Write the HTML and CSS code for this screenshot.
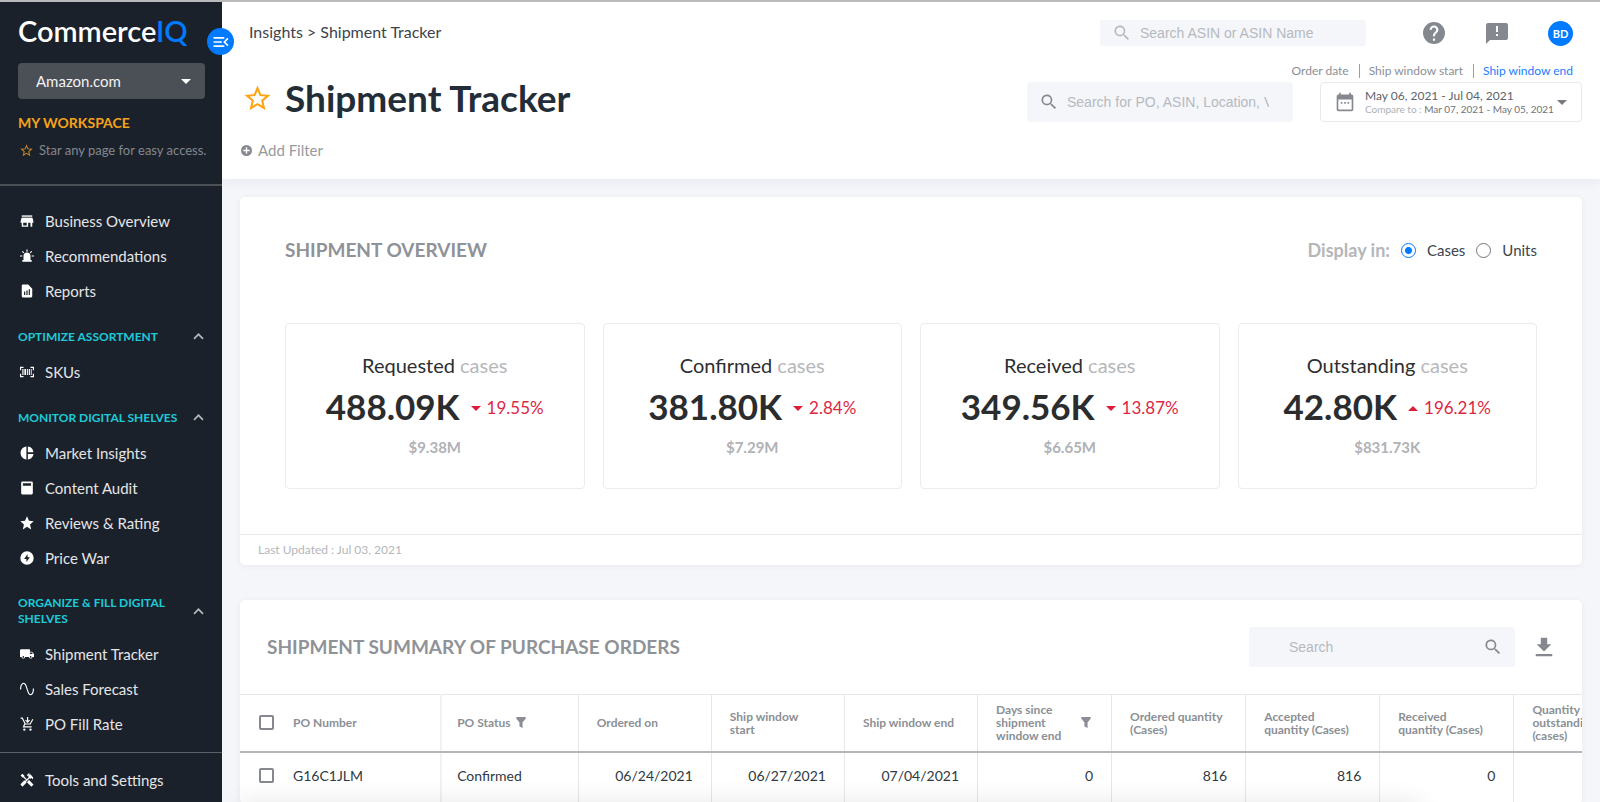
FILE: index.html
```html
<!DOCTYPE html>
<html lang="en">
<head>
    <meta charset="UTF-8">
    <meta name="viewport" content="width=device-width, initial-scale=1.0">
    <title>Shipment Tracker - CommerceIQ</title>
    <link rel="stylesheet" href="styles.css">
</head>
<body>
    <aside class="sidebar">
        <div class="sidebar-top">
            <a class="logo" href="#">Commerce<span>IQ</span></a>
            <div class="store">
                <select aria-label="Store">
                    <option>Amazon.com</option>
                </select>
            </div>
            <h2 class="workspace-title">MY WORKSPACE</h2>
            <p class="workspace-hint">
                <svg viewBox="0 0 24 24"><path d="M22 9.24l-7.19-.62L12 2 9.19 8.63 2 9.24l5.46 4.73L5.82 21 12 17.27 18.18 21l-1.63-7.03L22 9.24zM12 15.4l-3.76 2.27 1-4.28-3.32-2.88 4.38-.38L12 6.1l1.71 4.04 4.38.38-3.32 2.88 1 4.28L12 15.4z"/></svg>
                Star any page for easy access.
            </p>
        </div>

        <nav class="nav">
            <a href="#"><svg viewBox="0 0 24 24"><path opacity=".75" d="M3 2h18v4H3z"/><path d="M2.5 7h19L23 13v2h-2v7h-3v-7h-4v7H3v-7H1v-2zM5.5 15v4.5h6V15z"/></svg>Business Overview</a>
            <a href="#"><svg viewBox="0 0 24 24"><path d="M6 19v-7a6 6 0 0 1 12 0v7zM4 19h16v3H4zM11 1h2v3.5h-2zM0 11h4v2H0zM20 11h4v2h-4zM3.3 4.7l1.4-1.4 2.4 2.4-1.4 1.4zM19.3 3.3l1.4 1.4-2.4 2.4-1.4-1.4z"/></svg>Recommendations</a>
            <a href="#"><svg viewBox="0 0 24 24"><path d="M14 1H5a2 2 0 0 0-2 2v18a2 2 0 0 0 2 2h14a2 2 0 0 0 2-2V8zM9 19H7v-6h2zm4 0h-2v-8h2zm4 0h-2V9h2z" fill-rule="evenodd"/></svg>Reports</a>

            <button type="button" class="nav-group">OPTIMIZE ASSORTMENT<svg viewBox="2 2 20 20"><path d="M12 8l-6 6 1.4 1.4L12 10.8l4.6 4.6L18 14z"/></svg></button>
            <a href="#"><svg viewBox="0 0 24 24"><path d="M0 3h6v2H2v4H0zM18 3h6v6h-2V5h-4zM0 15h2v4h4v2H0zM22 15h2v6h-6v-2h4zM4 7h2v10H4zM7.5 7h3v10h-3zM12 7h1.5v10H12zM15 7h2v10h-2zM18.5 7H20v10h-1.5z"/></svg>SKUs</a>

            <button type="button" class="nav-group">MONITOR DIGITAL SHELVES<svg viewBox="2 2 20 20"><path d="M12 8l-6 6 1.4 1.4L12 10.8l4.6 4.6L18 14z"/></svg></button>
            <a href="#"><svg viewBox="0 0 24 24"><path d="M11 1v22C5.3 22.5 1 17.8 1 12S5.3 1.5 11 1zM13.5 1v9.5H23C22.5 5.5 18.5 1.5 13.5 1zM13.5 13.5V23c5-.5 9-4.5 9.5-9.5z"/></svg>Market Insights</a>
            <a href="#"><svg viewBox="0 0 24 24"><path fill-rule="evenodd" d="M4 1h16a2 2 0 0 1 2 2v18a2 2 0 0 1-2 2H4a2 2 0 0 1-2-2V3a2 2 0 0 1 2-2zm1 3v4h14V4z"/></svg>Content Audit</a>
            <a href="#"><svg viewBox="0 0 24 24"><path d="M12 18.3L19.2 23l-2-8.6L23.500 8.800l-8.100-.7L12 .5 8.600 8.100l-8.100.7 6.300 5.600-2 8.600z"/></svg>Reviews &amp; Rating</a>
            <a href="#"><svg viewBox="0 0 24 24"><path fill-rule="evenodd" d="M12 .5a11.5 11.5 0 1 0 0 23 11.5 11.5 0 0 0 0-23zM13 5v5.5h4L11 19v-5.5H7z"/></svg>Price War</a>

            <button type="button" class="nav-group"><span>ORGANIZE &amp; FILL DIGITAL SHELVES</span><svg viewBox="2 2 20 20"><path d="M12 8l-6 6 1.4 1.4L12 10.8l4.6 4.6L18 14z"/></svg></button>
            <a href="#"><svg viewBox="0 0 24 24"><path fill-rule="evenodd" d="M20.5 8H17V4H2a2 2 0 0 0-2 2v11h2.5a3.2 3.2 0 0 0 6.3 0h6.4a3.2 3.2 0 0 0 6.3 0H24v-5zM5.7 18.5a1.5 1.5 0 1 1 0-3 1.5 1.5 0 0 1 0 3zM20 9.5l2 2.5h-5V9.5zm-1.7 9a1.5 1.5 0 1 1 0-3 1.5 1.5 0 0 1 0 3z"/></svg>Shipment Tracker</a>
            <a href="#"><svg viewBox="0 0 24 24"><path class="stroke" d="M1 13C1 1 8 -1 10.5 7l3 9C16 25 23 23 23 11"/></svg>Sales Forecast</a>
            <a href="#"><svg viewBox="0 0 24 24"><circle cx="7.5" cy="21.5" r="2"/><circle cx="18" cy="21.5" r="2"/><path class="stroke" d="M1 2h3l5 10h8.5L22 4M8 12l-2 5h14M13 0v8M9.5 5.5L13 9l3.5-3.5"/></svg>PO Fill Rate</a>
        </nav>

        <div class="sidebar-bottom">
            <a href="#"><svg viewBox="1 1 22 22"><path d="M21.7 18.5l-6-6h-1l-2.5 2.5v1l6 6c.4.4 1 .4 1.4 0l2.1-2.1c.4-.4.4-1 0-1.4zM17.3 10.2l1.4-1.4 2.1 2.1c1.2-1.2 1.2-3.1 0-4.200l-3.500-3.600-1.400 1.500V1.700L15.200 1l-3.600 3.600.7.700h2.800l-1.400 1.400 1 1.100-2.900 2.900-4.100-4.200V5.100L4.700 2.100 1.900 4.900l3 3h1.400l4.200 4.200-.9.800H7.500l-5.300 5.400c-.4.400-.4 1 0 1.400l2.100 2.100c.4.400 1 .4 1.400 0l5.300-5.300v-2.100l5.200-5.200z"/></svg>Tools and Settings</a>
        </div>

        <button type="button" class="collapse" aria-label="Collapse menu">
            <svg viewBox="0 0 24 24"><path d="M3 18h13v-2H3zm0-5h10v-2H3zm0-7v2h13V6zm18 9.6L17.4 12 21 8.4 19.6 7l-5 5 5 5z"/></svg>
        </button>
    </aside>

    <main class="main">
        <header class="header">
            <div class="topbar">
                <div class="breadcrumb"><a href="#">Insights</a> &gt; <a href="#">Shipment Tracker</a></div>
                <label class="search search-asin">
                    <svg viewBox="0 0 24 24"><path d="M15.5 14h-.8l-.3-.3A6.5 6.5 0 1 0 13.7 14.4l.3.3v.8l5 5 1.5-1.5zm-6 0a4.5 4.5 0 1 1 0-9 4.5 4.5 0 0 1 0 9z"/></svg>
                    <input type="text" placeholder="Search ASIN or ASIN Name" aria-label="Search ASIN or ASIN Name">
                </label>
                <div class="topbar-icons">
                    <button type="button" aria-label="Help"><svg viewBox="0 0 24 24"><path d="M12 1a11 11 0 1 0 0 22 11 11 0 0 0 0-22zm1.1 18.7h-2.2v-2.2h2.2zm2.3-8.5l-1 1c-.8.8-1.3 1.5-1.3 3.1h-2.2v-.5c0-1.2.5-2.3 1.3-3.1l1.4-1.4c.4-.4.6-1 .6-1.5a2.2 2.2 0 0 0-4.4 0H7.6a4.4 4.4 0 0 1 8.8 0c0 1-.4 1.8-1 2.4z"/></svg></button>
                    <button type="button" aria-label="Feedback"><svg viewBox="0 0 24 24"><path d="M21 2H3a2 2 0 0 0-2 2v19l4-4h16a2 2 0 0 0 2-2V4a2 2 0 0 0-2-2zm-8 13h-2v-2h2zm0-4h-2V5h2z"/></svg></button>
                    <button type="button" class="avatar">BD</button>
                </div>
            </div>

            <div class="title-row">
                <div class="title">
                    <button type="button" aria-label="Star this page"><svg viewBox="0 0 24 24"><path d="M22 9.24l-7.19-.62L12 2 9.19 8.63 2 9.24l5.46 4.73L5.82 21 12 17.27 18.18 21l-1.63-7.03L22 9.24zM12 15.4l-3.76 2.27 1-4.28-3.32-2.88 4.38-.38L12 6.1l1.71 4.04 4.38.38-3.32 2.88 1 4.28L12 15.4z"/></svg></button>
                    <h1>Shipment Tracker</h1>
                </div>
                <label class="search search-po">
                    <svg viewBox="0 0 24 24"><path d="M15.5 14h-.8l-.3-.3A6.5 6.5 0 1 0 13.7 14.4l.3.3v.8l5 5 1.5-1.5zm-6 0a4.5 4.5 0 1 1 0-9 4.5 4.5 0 0 1 0 9z"/></svg>
                    <input type="text" placeholder="Search for PO, ASIN, Location, Vendor" aria-label="Search for PO">
                </label>
                <div class="dates">
                    <div class="date-tabs">
                        <a href="#">Order date</a>
                        <a href="#">Ship window start</a>
                        <a href="#" class="active">Ship window end</a>
                    </div>
                    <button type="button" class="date-range">
                        <svg viewBox="0 0 24 24"><path fill-rule="evenodd" d="M5 1h2v2h10V1h2v2h1a2 2 0 0 1 2 2v16a2 2 0 0 1-2 2H4a2 2 0 0 1-2-2V5a2 2 0 0 1 2-2h1zM4 9v12h16V9zM7 12h2v2H7zM11 12h2v2h-2zM15 12h2v2h-2z"/></svg>
                        <span class="date-text">
                            <span class="date-main">May 06, 2021 - Jul 04, 2021</span>
                            <span class="date-compare">Compare to : <b>Mar 07, 2021 - May 05, 2021</b></span>
                        </span>
                        <span class="caret-down"></span>
                    </button>
                </div>
            </div>

            <button type="button" class="add-filter">
                <svg viewBox="0 0 24 24"><path fill-rule="evenodd" d="M12 0a12 12 0 1 0 0 24 12 12 0 0 0 0-24zM10.5 5h3v5.5H19v3h-5.5V19h-3v-5.5H5v-3h5.5z"/></svg>
                Add Filter
            </button>
        </header>

        <div class="content">
            <section class="card">
                <div class="overview-head">
                    <h2>SHIPMENT OVERVIEW</h2>
                    <div class="display-in">
                        <span>Display in:</span>
                        <label><input type="radio" name="unit" checked>Cases</label>
                        <label><input type="radio" name="unit">Units</label>
                    </div>
                </div>
                <div class="stats">
                    <div class="stat">
                        <div class="stat-label">Requested <span>cases</span></div>
                        <div class="stat-value">488.09K <span class="change down">19.55%</span></div>
                        <div class="stat-amount">$9.38M</div>
                    </div>
                    <div class="stat">
                        <div class="stat-label">Confirmed <span>cases</span></div>
                        <div class="stat-value">381.80K <span class="change down">2.84%</span></div>
                        <div class="stat-amount">$7.29M</div>
                    </div>
                    <div class="stat">
                        <div class="stat-label">Received <span>cases</span></div>
                        <div class="stat-value">349.56K <span class="change down">13.87%</span></div>
                        <div class="stat-amount">$6.65M</div>
                    </div>
                    <div class="stat">
                        <div class="stat-label">Outstanding <span>cases</span></div>
                        <div class="stat-value">42.80K <span class="change up">196.21%</span></div>
                        <div class="stat-amount">$831.73K</div>
                    </div>
                </div>
                <div class="card-footer">Last Updated : Jul 03, 2021</div>
            </section>

            <section class="card">
                <div class="summary-head">
                    <h2>SHIPMENT SUMMARY OF PURCHASE ORDERS</h2>
                    <label class="search search-table">
                        <input type="text" placeholder="Search" aria-label="Search purchase orders">
                        <svg viewBox="0 0 24 24"><path d="M15.5 14h-.8l-.3-.3A6.5 6.5 0 1 0 13.7 14.4l.3.3v.8l5 5 1.5-1.5zm-6 0a4.5 4.5 0 1 1 0-9 4.5 4.5 0 0 1 0 9z"/></svg>
                    </label>
                    <button type="button" class="download" aria-label="Download"><svg viewBox="0 0 24 24"><path d="M20 9h-4.500V2h-7v7H4l8 8zM3 19.500v2.500h18v-2.500z"/></svg></button>
                </div>
                <div class="table-wrap">
                    <table>
                        <colgroup>
                            <col class="col-po">
                            <col class="col-status">
                            <col class="col-date" span="3">
                            <col class="col-qty" span="5">
                        </colgroup>
                        <thead>
                            <tr>
                                <th><label><input type="checkbox">PO Number</label></th>
                                <th><div class="th-filter near">PO Status <svg viewBox="0 0 12 14"><path d="M0 0h12v2L8 7v7L4 12V7L0 2z"/></svg></div></th>
                                <th>Ordered on</th>
                                <th>Ship window start</th>
                                <th>Ship window end</th>
                                <th><div class="th-filter">Days since shipment window end <svg viewBox="0 0 12 14"><path d="M0 0h12v2L8 7v7L4 12V7L0 2z"/></svg></div></th>
                                <th>Ordered quantity (Cases)</th>
                                <th>Accepted quantity (Cases)</th>
                                <th>Received quantity (Cases)</th>
                                <th>Quantity outstanding (cases)</th>
                            </tr>
                        </thead>
                        <tbody>
                            <tr>
                                <td><label><input type="checkbox">G16C1JLM</label></td>
                                <td>Confirmed</td>
                                <td class="num">06/24/2021</td>
                                <td class="num">06/27/2021</td>
                                <td class="num">07/04/2021</td>
                                <td class="num">0</td>
                                <td class="num">816</td>
                                <td class="num">816</td>
                                <td class="num">0</td>
                                <td class="num"></td>
                            </tr>
                        </tbody>
                    </table>
                </div>
            </section>
        </div>
    </main>
</body>
</html>
```
FILE: styles.css
```css
* {
    box-sizing: border-box;
}
body {
    margin: 0;
    height: 100vh;
    display: flex;
    overflow: hidden;
    border-top: 2px solid #b9babb;
    font-family: Lato, "Open Sans", sans-serif;
    font-size: 15px;
    color: #3c444d;
    background: #f5f6fa;
}
h1, h2, p {
    margin: 0;
}
a {
    color: inherit;
    text-decoration: none;
}
button {
    padding: 0;
    border: none;
    background: none;
    font-family: inherit;
    color: inherit;
    cursor: pointer;
}
svg {
    display: block;
    flex: none;
    fill: currentColor;
}
.stroke {
    fill: none;
    stroke: currentColor;
    stroke-width: 2;
}

/* Sidebar */
.sidebar {
    position: relative;
    z-index: 2;
    flex: none;
    width: 222px;
    display: flex;
    flex-direction: column;
    background: #1b212b;
    color: #e4e5e7;
}
.sidebar-top {
    height: 184px;
    padding: 12px 17px 0 18px;
    border-bottom: 2px solid #4b5057;
}
.logo {
    display: block;
    font-size: 29px;
    line-height: 34px;
    font-weight: 600;
    color: #fff;
}
.logo span {
    color: #007aff;
}
.store {
    position: relative;
    margin-top: 15px;
}
.store::after {
    content: "";
    position: absolute;
    right: 14px;
    top: 16px;
    border: 5px solid transparent;
    border-top-color: #fff;
    border-bottom: none;
    pointer-events: none;
}
.store select {
    appearance: none;
    width: 100%;
    height: 36px;
    padding: 0 18px;
    border: none;
    border-radius: 4px;
    background: #4b5057;
    color: #f1f1f2;
    font-family: inherit;
    font-size: 15px;
}
.workspace-title {
    margin-top: 14px;
    font-size: 14px;
    line-height: 20px;
    font-weight: 700;
    color: #f5a31a;
}
.workspace-hint {
    display: flex;
    align-items: center;
    gap: 5px;
    margin-top: 8px;
    padding-left: 1px;
    font-size: 13px;
    line-height: 18px;
    color: #83878d;
    white-space: nowrap;
}
.workspace-hint svg {
    width: 15px;
    height: 15px;
    color: #c58629;
}
.nav {
    flex: 1;
    overflow: hidden;
    padding-top: 17px;
}
.nav a,
.sidebar-bottom a {
    display: flex;
    align-items: center;
    gap: 11px;
    height: 35px;
    padding-left: 20px;
}
.nav a svg,
.sidebar-bottom svg {
    width: 14px;
    height: 14px;
    color: #fff;
}
.nav-group {
    display: flex;
    align-items: center;
    justify-content: space-between;
    width: 100%;
    min-height: 35px;
    margin-top: 11px;
    padding: 9px 15px 9px 18px;
    font-size: 12px;
    line-height: 16px;
    font-weight: 700;
    text-align: left;
    color: #1ccbd8;
}
.nav-group svg {
    width: 17px;
    height: 17px;
    color: #b5b8bb;
}
.nav-group span {
    width: 160px;
}
.sidebar-bottom {
    height: 50px;
    padding-top: 9px;
    border-top: 1px solid #5d6268;
}
.collapse {
    position: absolute;
    top: 26px;
    right: -12px;
    width: 27px;
    height: 27px;
    display: flex;
    align-items: center;
    justify-content: center;
    border-radius: 50%;
    background: #007aff;
    color: #fff;
}
.collapse svg {
    width: 20px;
    height: 20px;
}

/* Header */
.main {
    flex: 1;
    min-width: 0;
    overflow: hidden;
}
/* shade along the bottom edge of the scrolling area */
.main::after {
    content: "";
    position: fixed;
    left: 240px;
    right: 180px;
    bottom: -20px;
    height: 20px;
    box-shadow: 0 0 24px rgba(0, 0, 0, 0.1);
}
.header {
    padding: 18px 18px 19px 19px;
    background: #fff;
    box-shadow: 0 2px 12px rgba(30, 40, 60, 0.07);
}
.topbar {
    display: flex;
    align-items: center;
    height: 26px;
    padding: 0 9px 0 8px;
}
.breadcrumb {
    flex: 1;
    font-size: 16px;
    line-height: 18px;
    padding-bottom: 2px;
}
.search {
    display: flex;
    align-items: center;
    width: 266px;
    border-radius: 3px;
    background: #f5f6fa;
}
.search svg {
    width: 20px;
    height: 20px;
    color: #85898f;
}
.search input {
    flex: 1;
    min-width: 0;
    padding: 0;
    border: none;
    outline: none;
    background: none;
    font-family: "Liberation Sans", Arial, sans-serif;
    font-size: 14px;
    color: #3c444d;
}
.search input::placeholder {
    color: #b6b9be;
}
.search-asin {
    height: 26px;
    padding: 0 12px;
    gap: 8px;
}
.search-asin svg {
    color: #b6b9be;
}
.topbar-icons {
    display: flex;
    align-items: center;
    gap: 39px;
    margin-left: 56px;
    color: #85898f;
}
.topbar-icons svg {
    width: 24px;
    height: 24px;
}
.topbar-icons .avatar {
    width: 25px;
    height: 25px;
    border-radius: 50%;
    background: #007aff;
    color: #fff;
    font-size: 11px;
    font-weight: 700;
}
.title-row {
    display: flex;
    align-items: flex-end;
    margin-top: 18px;
}
.title {
    flex: 1;
    display: flex;
    align-items: center;
    gap: 12px;
    padding: 0 0 4px 1px;
}
.title svg {
    width: 31px;
    height: 31px;
    color: #ffa412;
}
.title h1 {
    font-size: 37px;
    line-height: 40px;
    font-weight: 700;
    color: #232d38;
}
.search-po {
    height: 40px;
    padding: 0 24px 0 12px;
    gap: 8px;
}
.dates {
    width: 262px;
    margin-left: 27px;
}
.date-tabs {
    display: flex;
    justify-content: flex-end;
    padding-right: 9px;
    margin-bottom: 4px;
    font-size: 12px;
    line-height: 14px;
    color: #8b8f95;
    white-space: nowrap;
}
.date-tabs a + a {
    margin-left: 10px;
    padding-left: 9px;
    border-left: 1px solid #9a9da2;
}
.date-tabs .active {
    color: #1a7cff;
}
.date-range {
    display: flex;
    align-items: center;
    width: 100%;
    height: 40px;
    padding: 0 14px;
    border: 1px solid #e8e9eb;
    border-radius: 4px;
    background: #fff;
    text-align: left;
}
.date-range svg {
    width: 20px;
    height: 20px;
    margin-right: 10px;
    color: #85898f;
}
.date-text {
    flex: 1;
    white-space: nowrap;
}
.date-main,
.date-compare {
    display: block;
}
.date-main {
    font-size: 12px;
    line-height: 14px;
    color: #5d636a;
}
.date-compare {
    font-size: 10px;
    line-height: 12px;
    color: #adb0b4;
}
.date-compare b {
    font-weight: 400;
    color: #6f747a;
}
.caret-down {
    border: 5px solid transparent;
    border-top-color: #777b80;
    border-bottom: none;
}
.add-filter {
    display: flex;
    align-items: center;
    gap: 6px;
    height: 20px;
    margin-top: 18px;
    font-size: 15px;
    color: #97999d;
}
.add-filter svg {
    width: 11px;
    height: 11px;
    color: #85898f;
}

/* Cards */
.content {
    display: flex;
    flex-direction: column;
    gap: 35px;
    padding: 18px;
}
.card {
    border-radius: 5px;
    background: #fff;
    box-shadow: 0 1px 6px rgba(30, 40, 60, 0.06);
}
.card h2 {
    font-size: 19px;
    line-height: 24px;
    font-weight: 700;
    color: #8f9297;
}
.overview-head {
    display: flex;
    align-items: center;
    justify-content: space-between;
    padding: 41px 45px 0;
}
.display-in {
    display: flex;
    align-items: center;
    gap: 11px;
    font-size: 15px;
}
.display-in > span {
    font-size: 18px;
    font-weight: 700;
    color: #b4b6ba;
}
.display-in label {
    display: flex;
    align-items: center;
    gap: 11px;
}
.display-in input {
    appearance: none;
    width: 15px;
    height: 15px;
    margin: 0;
    border: 1px solid #70757c;
    border-radius: 50%;
}
.display-in input:checked {
    border-color: #007aff;
    background: radial-gradient(#007aff 3px, #fff 4px);
}
.stats {
    display: grid;
    grid-template-columns: repeat(4, 1fr);
    gap: 18px;
    padding: 61px 45px 45px;
}
.stat {
    height: 166px;
    padding-top: 28px;
    border: 1px solid #ebecee;
    border-radius: 4px;
    text-align: center;
}
.stat-label {
    font-size: 20px;
    line-height: 26px;
    color: #2d2e30;
}
.stat-label span {
    color: #b6b7bb;
}
.stat-value {
    display: flex;
    align-items: center;
    justify-content: center;
    gap: 11px;
    margin-top: 5px;
    font-size: 35px;
    line-height: 42px;
    font-weight: 700;
    color: #2b2c2e;
}
.change {
    display: flex;
    align-items: center;
    gap: 6px;
    padding-top: 4px;
    font-size: 17px;
    font-weight: 400;
    color: #dd2744;
}
.change::before {
    content: "";
    border: 5px solid transparent;
}
.change.down::before {
    border-top-color: #dd1c3a;
    border-bottom: none;
}
.change.up::before {
    border-bottom-color: #dd1c3a;
    border-top: none;
}
.stat-amount {
    margin-top: 8px;
    font-size: 15px;
    line-height: 20px;
    font-weight: 700;
    color: #b0b2b6;
}
.card-footer {
    padding: 6px 18px;
    border-top: 1px solid #e8e9eb;
    font-size: 12px;
    line-height: 18px;
    color: #b4b6ba;
}

/* Purchase orders */
.summary-head {
    display: flex;
    align-items: center;
    padding: 27px;
}
.summary-head h2 {
    flex: 1;
}
.search-table {
    height: 40px;
    padding: 0 12px 0 40px;
}
.download {
    margin-left: 18px;
    color: #85898f;
}
.download svg {
    width: 22px;
    height: 22px;
}
.table-wrap {
    overflow: hidden;
}
table {
    width: 1408px;
    table-layout: fixed;
    border-collapse: collapse;
}
.col-po {
    width: 201px;
}
.col-status {
    width: 137px;
}
.col-date {
    width: 133px;
}
.col-qty {
    width: 134px;
}
th, td {
    padding: 0 18px;
    border-left: 1px solid #e6e7e9;
    text-align: left;
}
th:first-child,
td:first-child {
    padding-left: 19px;
    border-left: none;
}
th:nth-child(2),
td:nth-child(2) {
    padding-left: 15px;
    border-left: 2px solid #f0f1f2;
}
th {
    height: 57px;
    padding-right: 20px;
    border-top: 1px solid #e6e7e9;
    border-bottom: 2px solid #b3b6b9;
    font-size: 12px;
    line-height: 13px;
    font-weight: 700;
    color: #8b8f95;
}
td {
    height: 52px;
    padding-bottom: 6px;
    font-size: 14px;
    color: #2f3943;
}
.num {
    text-align: right;
}
table label {
    display: flex;
    align-items: center;
    gap: 19px;
}
table input {
    appearance: none;
    width: 15px;
    height: 15px;
    margin: 0;
    border: 2px solid #85898f;
    border-radius: 2px;
}
.th-filter {
    display: flex;
    align-items: center;
    justify-content: space-between;
    gap: 16px;
}
.th-filter.near {
    justify-content: flex-start;
    gap: 6px;
}
.th-filter svg {
    width: 10px;
    height: 11px;
}
```
